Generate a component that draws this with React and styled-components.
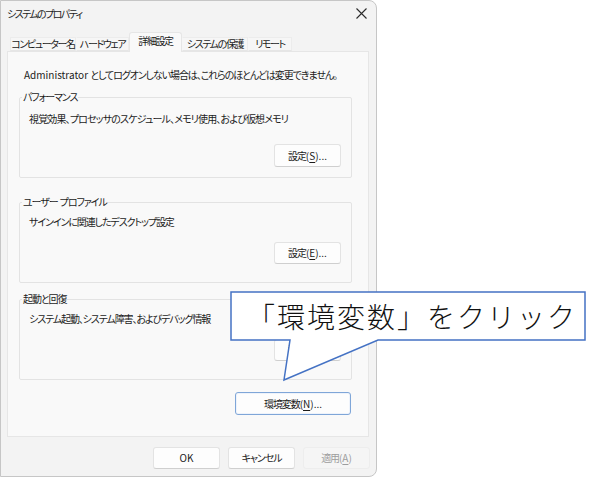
import styled, { createGlobalStyle } from "styled-components";

const Global = createGlobalStyle`
  html, body {
    margin: 0;
    padding: 0;
    background: #ffffff;
  }
  * {
    box-sizing: border-box;
  }
`;

const font = `"Noto Sans CJK JP", "Noto Sans", sans-serif`;

// UI text is narrow like Yu Gothic UI: proportional kana + tight tracking
const Page = styled.div`
  position: relative;
  width: 591px;
  height: 477px;
  display: flex;
  font-family: ${font};
  font-size: 10px;
  line-height: 16px;
  font-feature-settings: "palt" 1;
  letter-spacing: -1.1px;
  white-space: pre;
  color: #1b1b1b;
`;

const Latin = styled.span`
  letter-spacing: 0;
`;

const Dialog = styled.div`
  width: 377px;
  height: 477px;
  background: #f3f3f3;
  border: 1px solid #c6c6c6;
  border-radius: 0 8px 8px 0;
  display: flex;
  flex-direction: column;
`;

const TitleBar = styled.div`
  height: 25px;
  display: flex;
  align-items: center;
  justify-content: space-between;
  padding: 0 9px 0 6px;
  letter-spacing: -1.6px;
`;

const CloseIcon = () => (
  <svg width="11" height="11" viewBox="0 0 11 11">
    <path d="M0.5 0.5 L10.5 10.5 M10.5 0.5 L0.5 10.5" stroke="#2b2b2b" strokeWidth="1.1" fill="none" />
  </svg>
);

const TabStrip = styled.div`
  margin-top: 6px;
  height: 19px;
  display: flex;
  align-items: flex-end;
  padding-left: 9px;
  position: relative;
  z-index: 1;
`;

const Tab = styled.div`
  width: ${(p) => p.$w}px;
  height: ${(p) => (p.$active ? 20 : 14)}px;
  margin-bottom: ${(p) => (p.$active ? -1 : 0)}px;
  display: flex;
  align-items: center;
  justify-content: center;
  padding-bottom: ${(p) => (p.$active ? 4 : 0)}px;
  letter-spacing: -1.4px;
  background: ${(p) => (p.$active ? "#f9f9f9" : "#f6f6f6")};
  border: 1px solid ${(p) => (p.$active ? "#e6e6e6" : "#ececec")};
  border-left-color: ${(p) => (p.$active ? "#e6e6e6" : "transparent")};
  border-bottom: ${(p) => (p.$active ? "none" : "1px solid #e6e6e6")};
  border-radius: ${(p) => (p.$active ? "3px 3px 0 0" : "0")};

  &:first-child {
    border-left-color: #ececec;
  }
`;

const Panel = styled.div`
  margin: 0 7px 0 6px;
  height: 386px;
  background: #f9f9f9;
  border: 1px solid #e6e6e6;
  padding: 15px 16px 0 11px;
  display: flex;
  flex-direction: column;
`;

const Intro = styled.div`
  padding-left: 5px;
`;

const Group = styled.fieldset`
  margin: ${(p) => p.$top}px 0 0 0;
  padding: 0 0 ${(p) => p.$pad}px 0;
  border: 1px solid #e3e3e3;
  border-radius: 2px;
  display: flex;
  flex-direction: column;
  min-width: 0;
`;

const Legend = styled.legend`
  padding: 0 1px;
  margin-left: 2px;
`;

const Desc = styled.div`
  margin-top: ${(p) => p.$top}px;
  padding-left: 9px;
  letter-spacing: ${(p) => p.$ls ?? -1.1}px;
`;

const ButtonRow = styled.div`
  display: flex;
  justify-content: flex-end;
  margin-top: ${(p) => p.$top || 0}px;
  padding-right: ${(p) => p.$right || 0}px;
`;

const Button = styled.button`
  width: ${(p) => p.$w || 67}px;
  height: ${(p) => p.$h || 22}px;
  font: inherit;
  letter-spacing: inherit;
  color: ${(p) => (p.disabled ? "#9d9d9d" : "#1b1b1b")};
  background: ${(p) => (p.disabled ? "#f5f5f5" : "#fdfdfd")};
  border: 1px solid ${(p) => (p.$focus ? "#7fa6d8" : p.disabled ? "#ededed" : "#e3e3e3")};
  border-bottom-color: ${(p) => (p.$focus ? "#7fa6d8" : p.disabled ? "#ededed" : "#cfcfcf")};
  border-radius: 3px;
  padding: 0;
  display: flex;
  align-items: center;
  justify-content: center;
  box-shadow: ${(p) => (p.$focus ? "inset 0 0 0 1px #eef3fb" : "none")};
`;

const Key = styled.span`
  text-decoration: underline;
  text-underline-offset: 2px;
`;

const Footer = styled.div`
  display: flex;
  justify-content: flex-end;
  gap: 8px;
  padding: 10px 6px 0 0;
`;

const Callout = styled.div`
  position: absolute;
  left: 230px;
  top: 291px;
  width: 357px;
  height: 92px;
`;

const CalloutShape = styled.svg`
  position: absolute;
  inset: 0;
`;

const CalloutText = styled.div`
  position: relative;
  height: 50px;
  display: flex;
  align-items: center;
  padding-left: 17px;
  font-size: 28px;
  line-height: 1;
  letter-spacing: 2px;
  font-feature-settings: normal;
  font-weight: 300;
  color: #111;
`;

const Accel = ({ label, k, dots }) => (
  <span>
    {label}
    <Latin>
      (<Key>{k}</Key>){dots ? "..." : ""}
    </Latin>
  </span>
);

export default function App() {
  const tabs = [
    { label: "コンピューター名", w: 66 },
    { label: "ハードウェア", w: 53 },
    { label: "詳細設定", w: 53, active: true },
    { label: "システムの保護", w: 66 },
    { label: "リモート", w: 44 },
  ];

  return (
    <>
      <Global />
      <Page>
        <Dialog>
          <TitleBar>
            <span>システムのプロパティ</span>
            <CloseIcon />
          </TitleBar>
          <TabStrip>
            {tabs.map((t) => (
              <Tab key={t.label} $w={t.w} $active={t.active}>
                {t.label}
              </Tab>
            ))}
          </TabStrip>
          <Panel>
            <Intro>
              <Latin>Administrator </Latin>としてログオンしない場合は、これらのほとんどは変更できません。
            </Intro>

            <Group $top={6} $pad={10}>
              <Legend>パフォーマンス</Legend>
              <Desc $top={6} $ls={-0.85}>
                視覚効果、プロセッサのスケジュール、メモリ使用、および仮想メモリ
              </Desc>
              <ButtonRow $top={17} $right={10}>
                <Button $h={23}>
                  <Accel label="設定" k="S" dots />
                </Button>
              </ButtonRow>
            </Group>

            <Group $top={16} $pad={18}>
              <Legend>
                ユーザー<Latin> </Latin>プロファイル
              </Legend>
              <Desc $top={4}>サインインに関連したデスクトップ設定</Desc>
              <ButtonRow $top={12} $right={10}>
                <Button>
                  <Accel label="設定" k="E" dots />
                </Button>
              </ButtonRow>
            </Group>

            <Group $top={8} $pad={18}>
              <Legend>起動と回復</Legend>
              <Desc $top={4}>システム起動、システム障害、およびデバッグ情報</Desc>
              <ButtonRow $top={12} $right={10}>
                <Button>
                  <Accel label="設定" k="T" dots />
                </Button>
              </ButtonRow>
            </Group>

            <ButtonRow $top={12} $right={1}>
              <Button $w={116} $h={23} $focus>
                <Accel label="環境変数" k="N" dots />
              </Button>
            </ButtonRow>
          </Panel>
          <Footer>
            <Button>
              <Latin>OK</Latin>
            </Button>
            <Button>キャンセル</Button>
            <Button disabled>
              <Accel label="適用" k="A" />
            </Button>
          </Footer>
        </Dialog>

        <Callout>
          <CalloutShape width="357" height="92" viewBox="0 0 357 92">
            <path
              d="M1 1 H355 V49 H148 L54 89 L60 49 H1 Z"
              fill="#ffffff"
              stroke="#4472c4"
              strokeWidth="1.5"
              strokeLinejoin="miter"
            />
          </CalloutShape>
          <CalloutText>「環境変数」をクリック</CalloutText>
        </Callout>
      </Page>
    </>
  );
}
